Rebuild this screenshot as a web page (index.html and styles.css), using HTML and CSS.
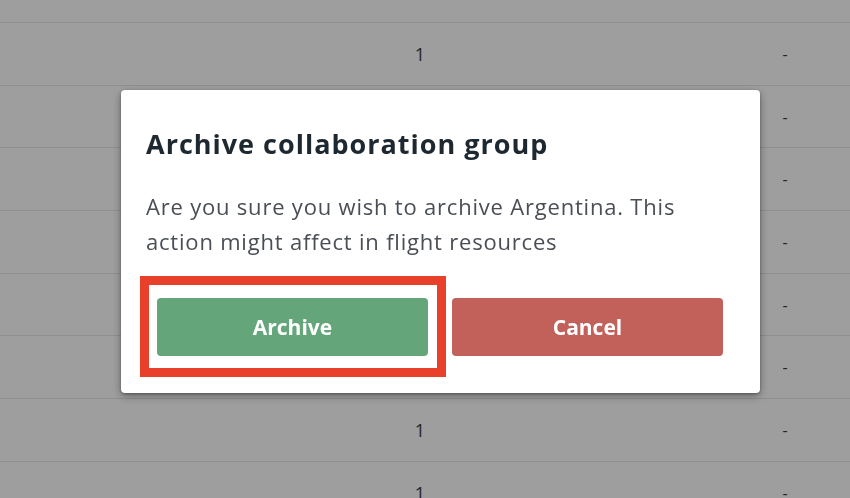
FILE: index.html
```html
<!DOCTYPE html>
<html lang="en">
<head>
<meta charset="utf-8">
<title>Archive collaboration group</title>
<link rel="stylesheet" href="styles.css">
</head>
<body>
<div class="table">
  <div class="row row-partial"></div>
  <div class="row"><span class="cell c-name"></span><span class="cell c-num">1</span><span class="cell c-mid"></span><span class="cell c-dash">-</span></div>
  <div class="row"><span class="cell c-name"></span><span class="cell c-num"></span><span class="cell c-mid"></span><span class="cell c-dash">-</span></div>
  <div class="row"><span class="cell c-name"></span><span class="cell c-num"></span><span class="cell c-mid"></span><span class="cell c-dash">-</span></div>
  <div class="row"><span class="cell c-name"></span><span class="cell c-num"></span><span class="cell c-mid"></span><span class="cell c-dash">-</span></div>
  <div class="row"><span class="cell c-name"></span><span class="cell c-num"></span><span class="cell c-mid"></span><span class="cell c-dash">-</span></div>
  <div class="row"><span class="cell c-name"></span><span class="cell c-num"></span><span class="cell c-mid"></span><span class="cell c-dash">-</span></div>
  <div class="row"><span class="cell c-name"></span><span class="cell c-num">1</span><span class="cell c-mid"></span><span class="cell c-dash">-</span></div>
  <div class="row"><span class="cell c-name"></span><span class="cell c-num">1</span><span class="cell c-mid"></span><span class="cell c-dash">-</span></div>
</div>
<div class="backdrop"></div>
<div class="dialog" role="dialog" aria-labelledby="dlg-title">
  <h2 class="dialog-title" id="dlg-title">Archive collaboration group</h2>
  <p class="dialog-text">Are you sure you wish to archive Argentina. This<br>action might affect in flight resources</p>
  <div class="dialog-actions">
    <button class="btn btn-archive">Archive</button>
    <button class="btn btn-cancel">Cancel</button>
  </div>
</div>
<div class="highlight"></div>
</body>
</html>
```

FILE: styles.css
```css
html, body {
  margin: 0;
  padding: 0;
  width: 850px;
  height: 498px;
  overflow: hidden;
  background: #ffffff;
  font-family: "Open Sans", "Noto Sans", sans-serif;
}

.table {
  display: flex;
  flex-direction: column;
}

.row {
  display: grid;
  grid-template-columns: 340px 160px 220px 130px;
  align-items: center;
  height: 62.7px;
  flex: none;
  box-sizing: border-box;
  border-bottom: 1px solid #e8e8e8;
}

.row-partial {
  height: 23px;
}

.cell {
  font-size: 18px;
  color: #3a3a3a;
  text-align: center;
}

.c-dash {
  font-size: 16px;
}

.backdrop {
  position: fixed;
  inset: 0;
  background: rgba(0, 0, 0, 0.38);
}

.dialog {
  position: fixed;
  left: 121px;
  top: 90px;
  width: 639px;
  height: 303px;
  box-sizing: border-box;
  background: #ffffff;
  border-radius: 4px;
  box-shadow: 0 3px 10px rgba(0, 0, 0, 0.35), 0 1px 3px rgba(0, 0, 0, 0.3);
  padding: 37px 25px 0 25px;
  display: flex;
  flex-direction: column;
}

.dialog-title {
  margin: 0;
  font-size: 27px;
  line-height: 34px;
  font-weight: 700;
  color: #1e2830;
  letter-spacing: 1px;
}

.dialog-text {
  margin: 28px 0 0 0;
  font-size: 22px;
  line-height: 35px;
  color: #4a4f56;
  letter-spacing: 0.8px;
  white-space: nowrap;
}

.dialog-actions {
  display: flex;
  gap: 24px;
  margin: 39px 12px 0 11px;
}

.btn {
  flex: 1;
  height: 58px;
  border: none;
  border-radius: 4px;
  color: #ffffff;
  font-family: "Open Sans", sans-serif;
  font-weight: 700;
  font-size: 21px;
}

.btn-archive {
  background: #64a67a;
}

.btn-cancel {
  background: #c2605a;
}

.highlight {
  position: fixed;
  left: 140px;
  top: 276px;
  width: 306px;
  height: 101px;
  box-sizing: border-box;
  border: 9px solid #e8402a;
}
```
